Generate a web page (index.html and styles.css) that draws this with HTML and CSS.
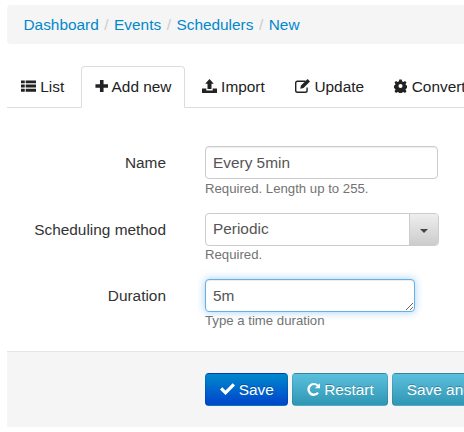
FILE: index.html
```html
<!DOCTYPE html>
<html lang="en">
<head>
  <meta charset="UTF-8" />
  <meta name="viewport" content="width=device-width, initial-scale=1.0"/>
  <title>Schedulers - New</title>
  <link rel="stylesheet" href="styles.css">
</head>
<body>
  <div class="page">
    <ul class="breadcrumb">
      <li><a href="#">Dashboard</a></li>
      <li class="sep">/</li>
      <li><a href="#">Events</a></li>
      <li class="sep">/</li>
      <li><a href="#">Schedulers</a></li>
      <li class="sep">/</li>
      <li><a href="#">New</a></li>
    </ul>

    <ul class="tabs">
      <li><a href="#">
        <svg class="icon" viewBox="0 0 16 14"><path d="M0 1h4v3H0zM5 1h11v3H5zM0 5.500h4v3H0zM5 5.500h11v3H5zM0 10h4v3H0zM5 10h11v3H5z"/></svg>
        List</a></li>
      <li class="active"><a href="#">
        <svg class="icon icon-plus" viewBox="0 0 13 14"><path d="M4.700 1h3.600v4.200h4.500v3.600H8.300V13H4.700V8.800H.2V5.200h4.500z"/></svg>
        Add new</a></li>
      <li><a href="#">
        <svg class="icon" viewBox="0 0 15 14"><path d="M7.500 0l4.300 4.700H9.500V10h-4V4.700H3.200zM0 9.500h4.300v2h6.400v-2H15V14H0z"/></svg>
        Import</a></li>
      <li><a href="#">
        <svg class="icon" viewBox="0 0 15 14"><path d="M2.500 1.500h8v1.400h-8A1.200 1.200 0 0 0 1.400 4v7.500a1.200 1.200 0 0 0 1.100 1.100h7.800a1.200 1.200 0 0 0 1.100-1.100V8.500h1.400v3a2.500 2.500 0 0 1-2.500 2.500H2.500A2.500 2.500 0 0 1 0 11.500V4a2.500 2.500 0 0 1 2.500-2.500z"/><path d="M12.600 0L15 2.400 8.500 9l-3.300.8.800-3.300z"/></svg>
        Update</a></li>
      <li><a href="#">
        <svg class="icon icon-narrow" viewBox="0 0 14 14"><path fill-rule="evenodd" d="M5.700 0h2.600l.4 2 1.300.6 1.800-1.100 1.700 1.800-1.100 1.700.6 1.300 2 .4v2.600l-2 .4-.6 1.300 1.100 1.700-1.700 1.800-1.800-1.100-1.300.6-.4 2H5.700l-.4-2-1.300-.6-1.800 1.100-1.700-1.800 1.100-1.700-.6-1.300-2-.4V6.600l2-.4.6-1.300-1.100-1.600 1.700-1.800L4 2.600l1.300-.6zM7 4.800a2.200 2.200 0 1 0 0 4.400 2.200 2.200 0 0 0 0-4.400z"/></svg>
        Convert</a></li>
    </ul>

    <form class="form">
      <div class="field">
        <label class="field-label">Name</label>
        <div class="field-control">
          <input class="input input-name" type="text" value="Every 5min">
          <p class="help">Required. Length up to 255.</p>
        </div>
      </div>
      <div class="field field-select">
        <label class="field-label">Scheduling method</label>
        <div class="field-control">
          <div class="select">
            <span class="select-value">Periodic</span>
            <span class="select-arrow"></span>
          </div>
          <p class="help">Required.</p>
        </div>
      </div>
      <div class="field">
        <label class="field-label">Duration</label>
        <div class="field-control">
          <textarea class="input input-duration">5m</textarea>
          <p class="help">Type a time duration</p>
        </div>
      </div>

      <div class="actions">
        <button class="btn btn-primary" type="button">
          <svg class="icon" viewBox="0 0 15 14"><path d="M5.500 13L0 7.500 2.300 5.200l3.200 3.200L12.700 1.200 15 3.500z"/></svg>
          Save</button>
        <button class="btn btn-info" type="button">
          <svg class="icon icon-narrow" viewBox="0 0 14 14"><path d="M14 .8v5.400H8.600l2.100-2.100A4.500 4.500 0 1 0 11 10.100l1.900 1.600A7 7 0 1 1 12.300 2.500z"/></svg>
          Restart</button>
        <button class="btn btn-info" type="button">Save and continue</button>
      </div>
    </form>
  </div>
</body>
</html>
```

FILE: styles.css
```css
html, body {
  margin: 0;
  height: 100%;
  overflow: hidden;
  background: #fff;
}

body {
  font-family: 'Liberation Sans', Arial, sans-serif;
  font-size: 15.4px;
  color: #333;
}

.page {
  width: 520px;
  padding: 5px 0 0 7px;
}

.breadcrumb {
  display: flex;
  gap: 5.5px;
  margin: 0 0 22px;
  padding: 11px 16.5px;
  height: 17px;
  line-height: 17px;
  list-style: none;
  background: #f5f5f5;
  border-radius: 4px;
}

.breadcrumb a {
  color: #0088cc;
  text-decoration: none;
}

.breadcrumb .sep {
  color: #ccc;
}

.tabs {
  display: flex;
  margin: 0;
  padding: 0;
  list-style: none;
  border-bottom: 1px solid #ddd;
}

.tabs li {
  margin-bottom: -1px;
}

.tabs a {
  display: block;
  padding: 10px 13px 11px;
  line-height: 19px;
  height: 19px;
  color: #222;
  white-space: nowrap;
  text-decoration: none;
  border: 1px solid transparent;
  border-radius: 4px 4px 0 0;
  margin-right: 2.4px;
}

.tabs .active a {
  background: #fff;
  border-color: #ddd #ddd #fff;
}

.icon {
  display: inline-block;
  width: 15px;
  height: 14px;
  vertical-align: -1px;
  fill: currentColor;
}

.icon-plus {
  width: 13.5px;
}

.icon-narrow {
  width: 13px;
}

.form {
  margin: 0;
  padding-top: 38px;
}

.field {
  display: flex;
  margin-bottom: 17px;
}

.field-select {
  margin-bottom: 16.8px;
}

.field-label {
  width: 159px;
  padding-top: 7px;
  line-height: 20px;
  text-align: right;
}

.field-control {
  margin-left: 39px;
}

.input {
  display: block;
  box-sizing: border-box;
  margin: 0;
  padding: 6px 7px;
  height: 33px;
  font-family: inherit;
  font-size: 15.4px;
  line-height: 19px;
  color: #555;
  background: #fff;
  border: 1px solid #ccc;
  border-radius: 4px;
  box-shadow: inset 0 1px 1px rgba(0,0,0,0.075);
}

.input-name {
  width: 233px;
}

.input-duration {
  width: 210px;
  border-color: #66afe9;
  outline: 0;
  box-shadow: inset 0 1px 1px rgba(0,0,0,0.075), 0 0 8px rgba(102,175,233,0.6);
}

.select {
  display: flex;
  box-sizing: border-box;
  width: 234px;
  height: 33px;
  color: #555;
  background: #fff;
  border: 1px solid #ccc;
  border-radius: 4px;
  overflow: hidden;
}

.select-value {
  flex: 1;
  padding: 0 7px;
  line-height: 29px;
}

.select-arrow {
  position: relative;
  width: 28px;
  background: linear-gradient(#eee, #ccc);
  border-left: 1px solid #ccc;
}

.select-arrow::after {
  content: "";
  position: absolute;
  left: 10px;
  top: 15px;
  border: 4px solid transparent;
  border-top-color: #444;
  border-bottom: 0;
}

.help {
  margin: 1.5px 0 0;
  font-size: 13.2px;
  line-height: 15px;
  color: #737373;
}

.actions {
  display: flex;
  gap: 4px;
  margin-top: 22.7px;
  padding: 21px 0 21px 198px;
  background: #f5f5f5;
  border-top: 1px solid #e5e5e5;
}

.btn {
  height: 33px;
  padding: 1px 13.5px 0;
  font-family: inherit;
  font-size: 15.4px;
  color: #fff;
  white-space: nowrap;
  border: 1px solid rgba(0,0,0,0.1);
  border-radius: 4px;
  text-shadow: 0 -1px 0 rgba(0,0,0,0.25);
}

.btn-primary {
  background: linear-gradient(#0088cc, #0044cc);
}

.btn-info {
  background: linear-gradient(#5bc0de, #2f96b4);
}
```
